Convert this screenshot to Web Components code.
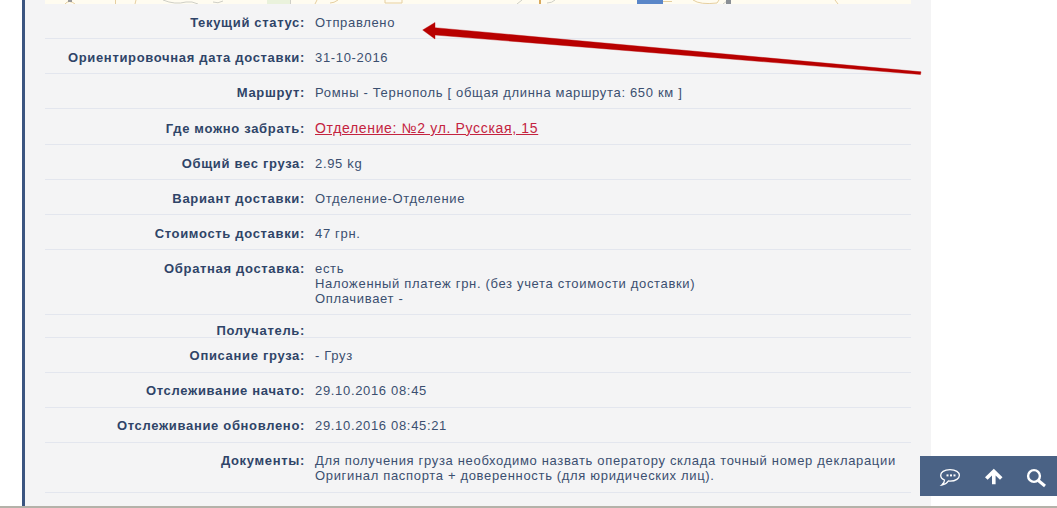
<!DOCTYPE html>
<html>
<head>
<meta charset="utf-8">
<style>
  html, body { margin: 0; height: 100%; background: #fff; overflow: hidden; }
  body { font-family: "Liberation Sans", Arial, sans-serif; }
</style>
</head>
<body>
<track-page>
  <track-row label="Текущий статус:">Отправлено</track-row>
  <track-row label="Ориентировочная дата доставки:">31-10-2016</track-row>
  <track-row label="Маршрут:">Ромны - Тернополь [ общая длинна маршрута: 650 км ]</track-row>
  <track-row label="Где можно забрать:" class="big"><a>Отделение: №2 ул. Русская, 15</a></track-row>
  <track-row label="Общий вес груза:">2.95 kg</track-row>
  <track-row label="Вариант доставки:">Отделение-Отделение</track-row>
  <track-row label="Стоимость доставки:">47 грн.</track-row>
  <track-row label="Обратная доставка:">есть<br>Наложенный платеж грн. (без учета стоимости доставки)<br>Оплачивает -</track-row>
  <track-row label="Получатель:" class="empty"></track-row>
  <track-row label="Описание груза:" class="up">- Груз</track-row>
  <track-row label="Отслеживание начато:" class="up">29.10.2016 08:45</track-row>
  <track-row label="Отслеживание обновлено:" class="up">29.10.2016 08:45:21</track-row>
  <track-row label="Документы:" class="up">Для получения груза необходимо назвать оператору склада точный номер декларации<br>Оригинал паспорта + доверенность (для юридических лиц).</track-row>
</track-page>
<float-bar></float-bar>

<script>
class TrackPage extends HTMLElement {
  constructor() {
    super();
    this.attachShadow({ mode: 'open' });
  }
  connectedCallback() {
    this.shadowRoot.innerHTML = `
      <style>
        :host { display: block; height: 506px; border-bottom: 2px solid #b4b2a9; position: relative; }
        .panel {
          margin-left: 22px; height: 506px;
          border-left: 3px solid #3b5580; background: #f4f4f5;
          padding: 0 20px; width: 866px; overflow: hidden;
        }
        .map { display: block; width: 866px; height: 4px; background: #fffcf0; }
        svg.arrow { position: absolute; left: 0; top: 0; pointer-events: none; }
      </style>
      <div class="panel">
        <svg class="map" viewBox="45 0 866 4" fill="none" stroke="#e6cfa0" stroke-width="1">
          <rect x="267" y="0" width="23" height="4" fill="#eaf2dc" stroke="none"/>
          <path d="M65 4 Q69 -1 75 4 M115.500 4 V0 M135 4 L136 0 M315 4 L317 0 M330 3 Q334 3 338 0 M385 0 V3 H402 V0" />
          <path d="M163 0 Q175 5 186 2 Q192 1 198 4 M213 2 Q218 4 223 1 M290.500 0 V4 M517 4 L522 0 M547 3 Q552 3 555 0 M723 4 L727 1" stroke="#cfcfc6"/>
          <path d="M663 1.500 H672 M693 0 Q700 5 717 3 L719 0 M835 0 L838 4" />
          <rect x="539" y="0" width="2" height="4" fill="#d9a95e" stroke="none"/>
          <rect x="637" y="0" width="26" height="4" fill="#5a86c8" stroke="none"/>
          <rect x="68" y="0" width="4" height="2" fill="#999" stroke="none"/>
          <rect x="726" y="0" width="5" height="4" fill="#8a8f95" stroke="none"/>
        </svg>
        <slot></slot>
      </div>
      <svg class="arrow" width="1057" height="508">
        <path d="M422.700 30 L435 22.500 L435 27.700 L921 71.800 L920.500 74.500 L435 35 L435 39 Z" fill="#b80000" stroke="#b80000" stroke-width="0.400" stroke-linejoin="round"/>
      </svg>
    `;
  }
}
customElements.define('track-page', TrackPage);

class TrackRow extends HTMLElement {
  constructor() {
    super();
    this.attachShadow({ mode: 'open' });
  }
  connectedCallback() {
    this.shadowRoot.innerHTML = `
      <style>
        :host {
          display: flex; align-items: baseline; box-sizing: border-box;
          padding: 11px 0 8px; border-bottom: 1px solid #e3e6ee;
          font-size: 13px; line-height: 15px; letter-spacing: 0.67px; color: #3b4f70;
        }
        :host(.up) { padding: 10px 0 9px; }
        :host(.big) .value { font-size: 14px; line-height: 16px; letter-spacing: 0.66px; }
        :host(.empty) { padding: 8px 0 0; height: 23px; }
        .label {
          flex: 0 0 260px; text-align: right; font-weight: bold; color: #2f4468;
        }
        .value { margin-left: 10px; }
        ::slotted(a) { color: #c4233f; text-decoration: underline; }
      </style>
      <div class="label"></div>
      <div class="value"><slot></slot></div>
    `;
    this.shadowRoot.querySelector('.label').textContent = this.getAttribute('label');
  }
}
customElements.define('track-row', TrackRow);

class FloatBar extends HTMLElement {
  constructor() {
    super();
    this.attachShadow({ mode: 'open' });
  }
  connectedCallback() {
    this.shadowRoot.innerHTML = `
      <style>
        :host {
          position: absolute; left: 920px; top: 456px; width: 137px; height: 40px;
          background: #4a6285;
        }
        svg { position: absolute; top: 0; left: 0; }
      </style>
      <svg width="137" height="40" viewBox="0 0 137 40" fill="none" stroke="#fff">
        <path stroke-width="1.300" d="M30 13.700 C24 13.700 20.700 16.300 20.700 19.300 C20.700 21.500 22.300 23.200 24.500 24 C24.500 25.800 23.600 27.500 21.800 29 C24.800 28.600 27 27 28.300 25 C28.900 25.100 29.400 25.100 30 25.100 C35.800 25.100 39.400 22.400 39.400 19.300 C39.400 16.300 35.800 13.700 30 13.700 Z"/>
        <g fill="#fff" stroke="none"><rect x="26.500" y="18.400" width="2" height="2"/><rect x="30" y="18.400" width="2" height="2"/><rect x="33.500" y="18.400" width="2" height="2"/></g>
        <path fill="#fff" stroke="none" d="M73.800 12.700 L82.500 21.300 L80 23.800 L75.600 19.500 V28.300 H72 V19.500 L67.600 23.800 L65 21.300 Z"/>
        <circle cx="114" cy="20" r="5.900" stroke-width="2.400"/>
        <path d="M118.300 24.500 L125 30" stroke-width="3"/>
      </svg>
    `;
  }
}
customElements.define('float-bar', FloatBar);
</script>
</body>
</html>
